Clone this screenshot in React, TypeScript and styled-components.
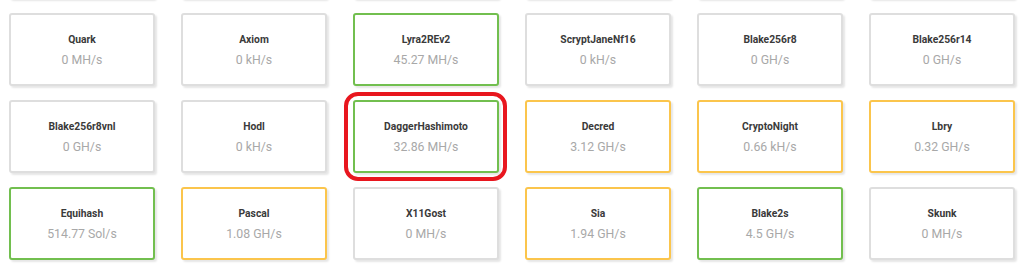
import React from "react";
import styled, { createGlobalStyle, css } from "styled-components";

const Global = createGlobalStyle`
  html, body { margin: 0; padding: 0; background: #ffffff; overflow: hidden; }
  body { font-family: Roboto, "Noto Sans", "Liberation Sans", sans-serif; }
`;

type Status = "idle" | "good" | "warn";

const borderColors: Record<Status, string> = {
  idle: "#dedede",
  good: "#72bf4f",
  warn: "#fbc54c",
};

const Page = styled.div`
  padding: 0 9px;
  height: 272px;
  overflow: hidden;
`;

const Grid = styled.div`
  margin-top: -74px;
  display: grid;
  grid-template-columns: repeat(6, 146px);
  grid-auto-rows: 73px;
  column-gap: 26px;
  row-gap: 14px;
`;

const Card = styled.div<{ $status: Status; $highlight?: boolean }>`
  position: relative;
  box-sizing: border-box;
  padding-top: 3px;
  border: 2px solid ${(p) => borderColors[p.$status]};
  border-radius: 3px;
  background: #fff;
  box-shadow: 2px 2px 2px rgba(0, 0, 0, 0.1);
  display: flex;
  flex-direction: column;
  align-items: center;
  justify-content: center;
  gap: 3px;
  ${(p) =>
    p.$highlight &&
    css`
      &::after {
        content: "";
        position: absolute;
        left: -11px;
        top: -10px;
        right: -10px;
        bottom: -10px;
        border: 4px solid #e8161e;
        border-radius: 14px;
        pointer-events: none;
      }
    `}
`;

const Name = styled.div`
  font-size: 10.3px;
  line-height: 15px;
  font-weight: 700;
  color: #3a3a3a;
`;

const Rate = styled.div`
  font-size: 12.3px;
  line-height: 20px;
  color: #a8a8a8;
`;

type Algo = { name: string; rate: string; status: Status; highlight?: boolean };

const algos: Algo[] = [
  { name: "Quark", rate: "0 MH/s", status: "idle" },
  { name: "Axiom", rate: "0 kH/s", status: "idle" },
  { name: "Lyra2REv2", rate: "45.27 MH/s", status: "good" },
  { name: "ScryptJaneNf16", rate: "0 kH/s", status: "idle" },
  { name: "Blake256r8", rate: "0 GH/s", status: "idle" },
  { name: "Blake256r14", rate: "0 GH/s", status: "idle" },
  { name: "Blake256r8vnl", rate: "0 GH/s", status: "idle" },
  { name: "Hodl", rate: "0 kH/s", status: "idle" },
  { name: "DaggerHashimoto", rate: "32.86 MH/s", status: "good", highlight: true },
  { name: "Decred", rate: "3.12 GH/s", status: "warn" },
  { name: "CryptoNight", rate: "0.66 kH/s", status: "warn" },
  { name: "Lbry", rate: "0.32 GH/s", status: "warn" },
  { name: "Equihash", rate: "514.77 Sol/s", status: "good" },
  { name: "Pascal", rate: "1.08 GH/s", status: "warn" },
  { name: "X11Gost", rate: "0 MH/s", status: "idle" },
  { name: "Sia", rate: "1.94 GH/s", status: "warn" },
  { name: "Blake2s", rate: "4.5 GH/s", status: "good" },
  { name: "Skunk", rate: "0 MH/s", status: "idle" },
];

export default function App() {
  return (
    <>
      <Global />
      <Page>
        <Grid>
          {/* row scrolled above the view: only its bottom edge shows */}
          {Array.from({ length: 6 }, (_, i) => (
            <Card key={`above-${i}`} $status="idle" />
          ))}
          {algos.map((a) => (
            <Card key={a.name} $status={a.status} $highlight={a.highlight}>
              <Name>{a.name}</Name>
              <Rate>{a.rate}</Rate>
            </Card>
          ))}
        </Grid>
      </Page>
    </>
  );
}
